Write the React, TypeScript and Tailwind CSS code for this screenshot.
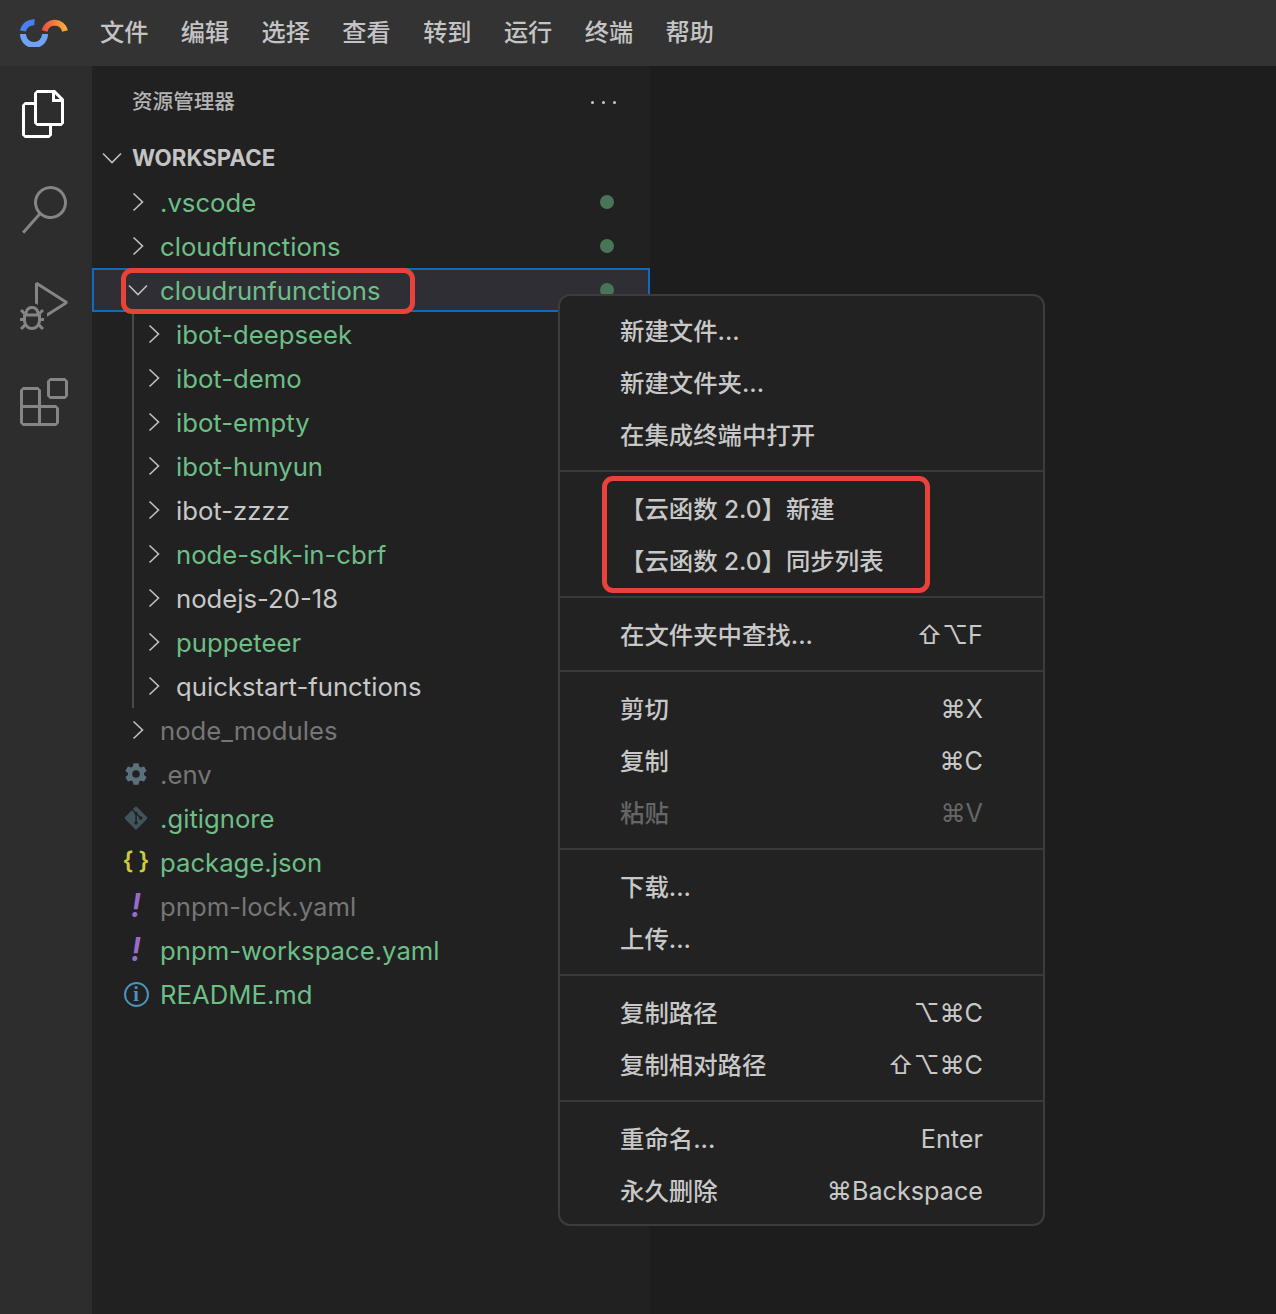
import { FaGitAlt } from 'react-icons/fa';
import { IoSettingsSharp } from 'react-icons/io5';
import { VscDebugAlt, VscExtensions, VscFiles, VscSearch } from 'react-icons/vsc';

const green = 'text-[#6cbf86]';
const plain = 'text-[#c8c8c8]';
const muted = 'text-[#767676]';

const menuBar = ['文件', '编辑', '选择', '查看', '转到', '运行', '终端', '帮助'];

const children = [
  { name: 'ibot-deepseek', color: green },
  { name: 'ibot-demo', color: green },
  { name: 'ibot-empty', color: green },
  { name: 'ibot-hunyun', color: green },
  { name: 'ibot-zzzz', color: plain },
  { name: 'node-sdk-in-cbrf', color: green },
  { name: 'nodejs-20-18', color: plain },
  { name: 'puppeteer', color: green },
  { name: 'quickstart-functions', color: plain },
];

const menuGroups = [
  [{ label: '新建文件...' }, { label: '新建文件夹...' }, { label: '在集成终端中打开' }],
  [{ label: '【云函数 2.0】新建' }, { label: '【云函数 2.0】同步列表' }],
  [{ label: '在文件夹中查找...', keys: '⇧⌥F' }],
  [
    { label: '剪切', keys: '⌘X' },
    { label: '复制', keys: '⌘C' },
    { label: '粘贴', keys: '⌘V', disabled: true },
  ],
  [{ label: '下载...' }, { label: '上传...' }],
  [
    { label: '复制路径', keys: '⌥⌘C' },
    { label: '复制相对路径', keys: '⇧⌥⌘C' },
  ],
  [
    { label: '重命名...', keys: 'Enter' },
    { label: '永久删除', keys: '⌘Backspace' },
  ],
];

function Logo() {
  return (
    <svg width="50" height="28" viewBox="0 0 50 28" fill="none">
      <defs>
        <linearGradient id="logo-arc" x1="22" y1="0" x2="48" y2="0" gradientUnits="userSpaceOnUse">
          <stop offset="0" stopColor="#e8483f" />
          <stop offset="1" stopColor="#fbb03b" />
        </linearGradient>
      </defs>
      <path d="M4 12 A11 11 0 0 1 15.5 3.2" stroke="#4a7fee" strokeWidth="6" />
      <path d="M4 15 A11 11 0 0 0 26 15" stroke="#6fa1f7" strokeWidth="6" />
      <path d="M25.5 12 A10.5 10.5 0 0 1 46 12" stroke="url(#logo-arc)" strokeWidth="6" />
    </svg>
  );
}

function ChevronR() {
  return (
    <svg width="12" height="20" viewBox="0 0 12 20" fill="none" className="text-[#c0c0c0]">
      <path d="M1.5 1.5 L10.5 10 L1.5 18.5" stroke="currentColor" strokeWidth="1.6" />
    </svg>
  );
}

function ChevronD() {
  return (
    <svg width="20" height="12" viewBox="0 0 20 12" fill="none" className="text-[#c0c0c0]">
      <path d="M1 1.5 L10 10.5 L19 1.5" stroke="currentColor" strokeWidth="1.6" />
    </svg>
  );
}

function Dot({ left = 'left-[508px]' }: { left?: string }) {
  return <span className={`absolute ${left} h-[14px] w-[14px] rounded-full bg-[#487558]`} />;
}

function FolderRow({ name, color, depth = 0, dot = false }: { name: string; color: string; depth?: number; dot?: boolean }) {
  return (
    <div className={`relative flex h-11 items-center gap-[16px] ${depth ? 'pl-[56px]' : 'pl-[40px]'}`}>
      <ChevronR />
      <span className={`pt-[2px] ${color}`}>{name}</span>
      {dot && <Dot />}
    </div>
  );
}

function FileRow({ name, color, icon }: { name: string; color: string; icon: React.ReactNode }) {
  return (
    <div className="flex h-11 items-center pl-[28px]">
      <span className="mr-[8px] flex w-[32px] items-center justify-center">{icon}</span>
      <span className={`pt-[2px] ${color}`}>{name}</span>
    </div>
  );
}

function YamlMark() {
  return <span className="text-[32px] leading-none font-semibold text-[#9a6bc9] italic">!</span>;
}

export default function App() {
  return (
    <div className="relative flex h-[1314px] w-[1276px] flex-col overflow-hidden bg-[#1d1d1d] font-['Inter','Noto_Sans_CJK_SC',sans-serif]">
      <header className="flex h-[66px] items-center bg-[#333333] pl-[19px]">
        <Logo />
        <nav className="ml-[31px] flex gap-[32.4px] text-[24.2px] font-medium text-[#c4c4c4]">
          {menuBar.map((item) => (
            <span key={item}>{item}</span>
          ))}
        </nav>
      </header>

      <div className="flex flex-1">
        <aside className="flex w-[92px] flex-col items-center gap-[48px] bg-[#2d2d2d] pt-[24px] pr-[4px]">
          <VscFiles size={48} className="text-white" />
          <VscSearch size={48} className="text-[#858585]" />
          <VscDebugAlt size={48} className="text-[#858585]" />
          <VscExtensions size={48} className="text-[#858585]" />
        </aside>

        <section className="w-[558px] bg-[#212121] text-[25.7px]">
          <div className="flex h-[70px] items-center justify-between pt-[2px] pr-[34px] pl-[40px]">
            <span className="text-[20.6px] font-medium text-[#b4b4b4]">资源管理器</span>
            <span className="flex gap-[8px]">
              <i className="h-[3px] w-[3px] rounded-full bg-[#c8c8c8]" />
              <i className="h-[3px] w-[3px] rounded-full bg-[#c8c8c8]" />
              <i className="h-[3px] w-[3px] rounded-full bg-[#c8c8c8]" />
            </span>
          </div>

          <div className="flex h-11 items-center gap-[10px] pl-[10px] text-[22.3px] font-bold text-[#c4c4c4]">
            <ChevronD />
            WORKSPACE
          </div>

          <FolderRow name=".vscode" color={green} dot />
          <FolderRow name="cloudfunctions" color={green} dot />

          <div className="relative flex h-11 items-center gap-[12px] border-2 border-[#0f6cbd] bg-[#2e2e34] pl-[34px]">
            <ChevronD />
            <span className={`pt-[2px] ${green}`}>cloudrunfunctions</span>
            <Dot left="left-[506px]" />
          </div>

          <div className="relative">
            <span className="absolute top-0 bottom-0 left-[40px] w-[2px] bg-[#4a4a4a]" />
            {children.map((c) => (
              <FolderRow key={c.name} name={c.name} color={c.color} depth={1} />
            ))}
          </div>

          <FolderRow name="node_modules" color={muted} />
          <FileRow name=".env" color={muted} icon={<IoSettingsSharp size={24} className="text-[#5c707b]" />} />
          <FileRow name=".gitignore" color={green} icon={<FaGitAlt size={26} className="text-[#41535b]" />} />
          <FileRow
            name="package.json"
            color={green}
            icon={
              <span className="mb-[3px] flex gap-[5px] text-[24px] leading-none font-semibold text-[#cbcb41]">
                <span>{'{'}</span>
                <span>{'}'}</span>
              </span>
            }
          />
          <FileRow name="pnpm-lock.yaml" color={muted} icon={<YamlMark />} />
          <FileRow name="pnpm-workspace.yaml" color={green} icon={<YamlMark />} />
          <FileRow
            name="README.md"
            color={green}
            icon={
              <span className="flex h-[25px] w-[25px] items-center justify-center rounded-full border-2 border-[#4a93bd] font-['Liberation_Serif',serif] text-[20px] leading-none font-bold text-[#4a93bd]">
                i
              </span>
            }
          />
        </section>
      </div>

      {/* context menu */}
      <div className="absolute top-[294px] left-[558px] w-[487px] rounded-[12px] border-2 border-[#3c3c3c] bg-[#222222] pt-[9px] pb-[7px] text-[24.4px]">
        {menuGroups.map((group, i) => (
          <div key={i}>
            {i > 0 && <div className="mt-[9px] mb-[11px] h-[2px] bg-[#3a3a3a]" />}
            {group.map((item) => (
              <div
                key={item.label}
                className={`flex h-[52px] items-center justify-between pr-[60px] pl-[60px] ${'disabled' in item && item.disabled ? 'text-[#666666]' : 'text-[#c8c8c8]'}`}
              >
                <span className="font-medium whitespace-pre">{item.label}</span>
                {'keys' in item && <span className="pt-[2px] font-['Inter','DejaVu_Sans',sans-serif] text-[25.2px]">{item.keys}</span>}
              </div>
            ))}
          </div>
        ))}
      </div>

      {/* red annotation boxes */}
      <div className="absolute top-[268px] left-[121px] h-[46px] w-[294px] rounded-[11px] border-[5px] border-[#e8433a]" />
      <div className="absolute top-[476px] left-[602px] h-[117px] w-[328px] rounded-[11px] border-[5px] border-[#e8433a]" />
    </div>
  );
}
